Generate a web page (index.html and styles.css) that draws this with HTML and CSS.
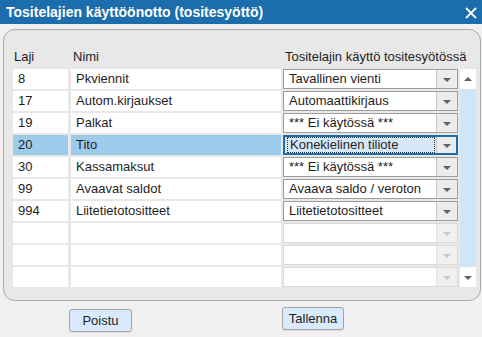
FILE: index.html
```html
<!DOCTYPE html>
<html lang="fi">
<head>
  <meta charset="UTF-8">
  <title>Tositelajien käyttöönotto (tositesyöttö)</title>
  <link rel="stylesheet" href="styles.css">
</head>
<body>
  <div class="titlebar">
    <span class="title">Tositelajien käyttöönotto (tositesyöttö)</span>
    <svg class="close" width="12" height="12" viewBox="0 0 12 12">
      <path d="M1 1 L11 11 M11 1 L1 11" stroke="#fff" stroke-width="1.8" fill="none"/>
    </svg>
  </div>

  <div class="panel">
    <div class="head">
      <span class="h-laji">Laji</span>
      <span class="h-nimi">Nimi</span>
      <span class="h-kaytto">Tositelajin käyttö tositesyötössä</span>
    </div>
    <div class="table">
      <div class="rows">
        <div class="row"><div class="cell">8</div><div class="cell">Pkviennit</div><div class="combo"><span class="val">Tavallinen vienti</span><span class="btn"><i class="down"></i></span></div></div>
        <div class="row"><div class="cell">17</div><div class="cell">Autom.kirjaukset</div><div class="combo"><span class="val">Automaattikirjaus</span><span class="btn"><i class="down"></i></span></div></div>
        <div class="row"><div class="cell">19</div><div class="cell">Palkat</div><div class="combo"><span class="val">*** Ei käytössä ***</span><span class="btn"><i class="down"></i></span></div></div>
        <div class="row selected"><div class="cell">20</div><div class="cell">Tito</div><div class="combo focus"><span class="val"><span class="dots">Konekielinen tiliote</span></span><span class="btn"><i class="down"></i></span></div></div>
        <div class="row"><div class="cell">30</div><div class="cell">Kassamaksut</div><div class="combo"><span class="val">*** Ei käytössä ***</span><span class="btn"><i class="down"></i></span></div></div>
        <div class="row"><div class="cell">99</div><div class="cell">Avaavat saldot</div><div class="combo"><span class="val">Avaava saldo / veroton</span><span class="btn"><i class="down"></i></span></div></div>
        <div class="row"><div class="cell">994</div><div class="cell">Liitetietotositteet</div><div class="combo"><span class="val">Liitetietotositteet</span><span class="btn"><i class="down"></i></span></div></div>
        <div class="row"><div class="cell"></div><div class="cell"></div><div class="combo empty"><span class="val"></span><span class="btn"><i class="down"></i></span></div></div>
        <div class="row"><div class="cell"></div><div class="cell"></div><div class="combo empty"><span class="val"></span><span class="btn"><i class="down"></i></span></div></div>
        <div class="row"><div class="cell"></div><div class="cell"></div><div class="combo empty"><span class="val"></span><span class="btn"><i class="down"></i></span></div></div>
      </div>
      <div class="scrollbar">
        <div class="sb-btn"><i class="up"></i></div>
        <div class="sb-track"></div>
        <div class="sb-btn"><i class="down"></i></div>
      </div>
    </div>
  </div>

  <div class="footer">
    <button class="poistu">Poistu</button>
    <button class="tallenna">Tallenna</button>
  </div>
</body>
</html>
```

FILE: styles.css
```css
/* dialogi */
body {
  margin: 0;
  background: #f0f0f0;
  font-family: "Liberation Sans", Arial, sans-serif;
  font-size: 13px;
  color: #1e1e1e;
  width: 482px;
  height: 337px;
  overflow: hidden;
}
.titlebar {
  height: 24px;
  background: #1b6dab;
  color: #fff;
  display: flex;
  align-items: center;
  justify-content: space-between;
  padding: 0 5px 0 6px;
}
.title {
  font-weight: bold;
  font-size: 14px;
}
.close {
  margin-top: 1px;
}

/* paneeli */
.panel {
  margin: 5px 1px 0 3px;
  border: 1px solid #a9a9a9;
  border-radius: 12px;
  background: #e8e8e8;
  padding: 19px 0 13px 9px;
}
.head {
  display: flex;
  line-height: 16px;
  height: 16px;
  margin-bottom: 4px;
}
.h-laji {
  width: 58px;
  padding-left: 1px;
}
.h-nimi {
  width: 212px;
  padding-left: 1px;
}
.table {
  display: flex;
  gap: 2px;
}
.rows {
  display: flex;
  flex-direction: column;
  gap: 2px;
}
.row {
  display: flex;
  gap: 2px;
  height: 20px;
}
.cell {
  background: #fff;
  line-height: 20px;
  padding-left: 5px;
  box-sizing: border-box;
}
.cell:first-child {
  width: 55px;
  margin-right: 1px;
}
.cell:nth-child(2) {
  width: 210px;
}
.selected .cell {
  background: #9ccbeb;
}

/* valintalista */
.combo {
  width: 175px;
  height: 20px;
  box-sizing: border-box;
  border: 1px solid #9d9d9d;
  background: #fff;
  display: flex;
}
.combo .val {
  flex: 1;
  line-height: 18px;
  padding-left: 5px;
  white-space: nowrap;
  overflow: hidden;
}
.combo .btn {
  width: 20px;
  border-left: 1px solid #c8c8c8;
  background: #ececec;
  display: flex;
  align-items: center;
  justify-content: center;
}
.combo.empty {
  border-color: #dadada;
}
.combo.empty .btn {
  border-left-color: #e2e2e2;
  background: #f0f0f0;
}
.combo.empty .down {
  border-top-color: #c6c6c6;
}
.combo.focus {
  border: 2px solid #1b6dab;
  background: #d6e9f8;
}
.combo.focus .val {
  line-height: 16px;
  padding: 0 1px 0 2px;
}
.combo.focus .dots {
  display: block;
  border: 1px dotted #333;
  padding-left: 2px;
  line-height: 14px;
}
.combo.focus .btn {
  background: #ececec;
  width: 19px;
}
.down {
  width: 0;
  height: 0;
  border-left: 4px solid transparent;
  border-right: 4px solid transparent;
  border-top: 4px solid #5b6170;
  margin-top: 1px;
}
.up {
  width: 0;
  height: 0;
  border-left: 4px solid transparent;
  border-right: 4px solid transparent;
  border-bottom: 4px solid #5b6170;
}

/* vierityspalkki */
.scrollbar {
  width: 16px;
  display: flex;
  flex-direction: column;
}
.sb-btn {
  height: 20px;
  background: #fff;
  display: flex;
  align-items: center;
  justify-content: center;
}
.sb-track {
  flex: 1;
  background: #cfe6f8;
}

/* painikkeet */
.footer {
  display: flex;
  align-items: flex-start;
  padding: 6px 0 0 69px;
}
button {
  font-family: "Liberation Sans", Arial, sans-serif;
  font-size: 13px;
  color: #1e1e1e;
  background: #d8eafb;
  border: 1px solid #a3a3a3;
  border-radius: 3px;
  padding: 0;
  box-shadow: 0 1px 1px rgba(0,0,0,0.08);
}
.poistu {
  width: 63px;
  height: 23px;
  margin-top: 2px;
}
.tallenna {
  width: 62px;
  height: 23px;
  margin-left: 150px;
}
```
